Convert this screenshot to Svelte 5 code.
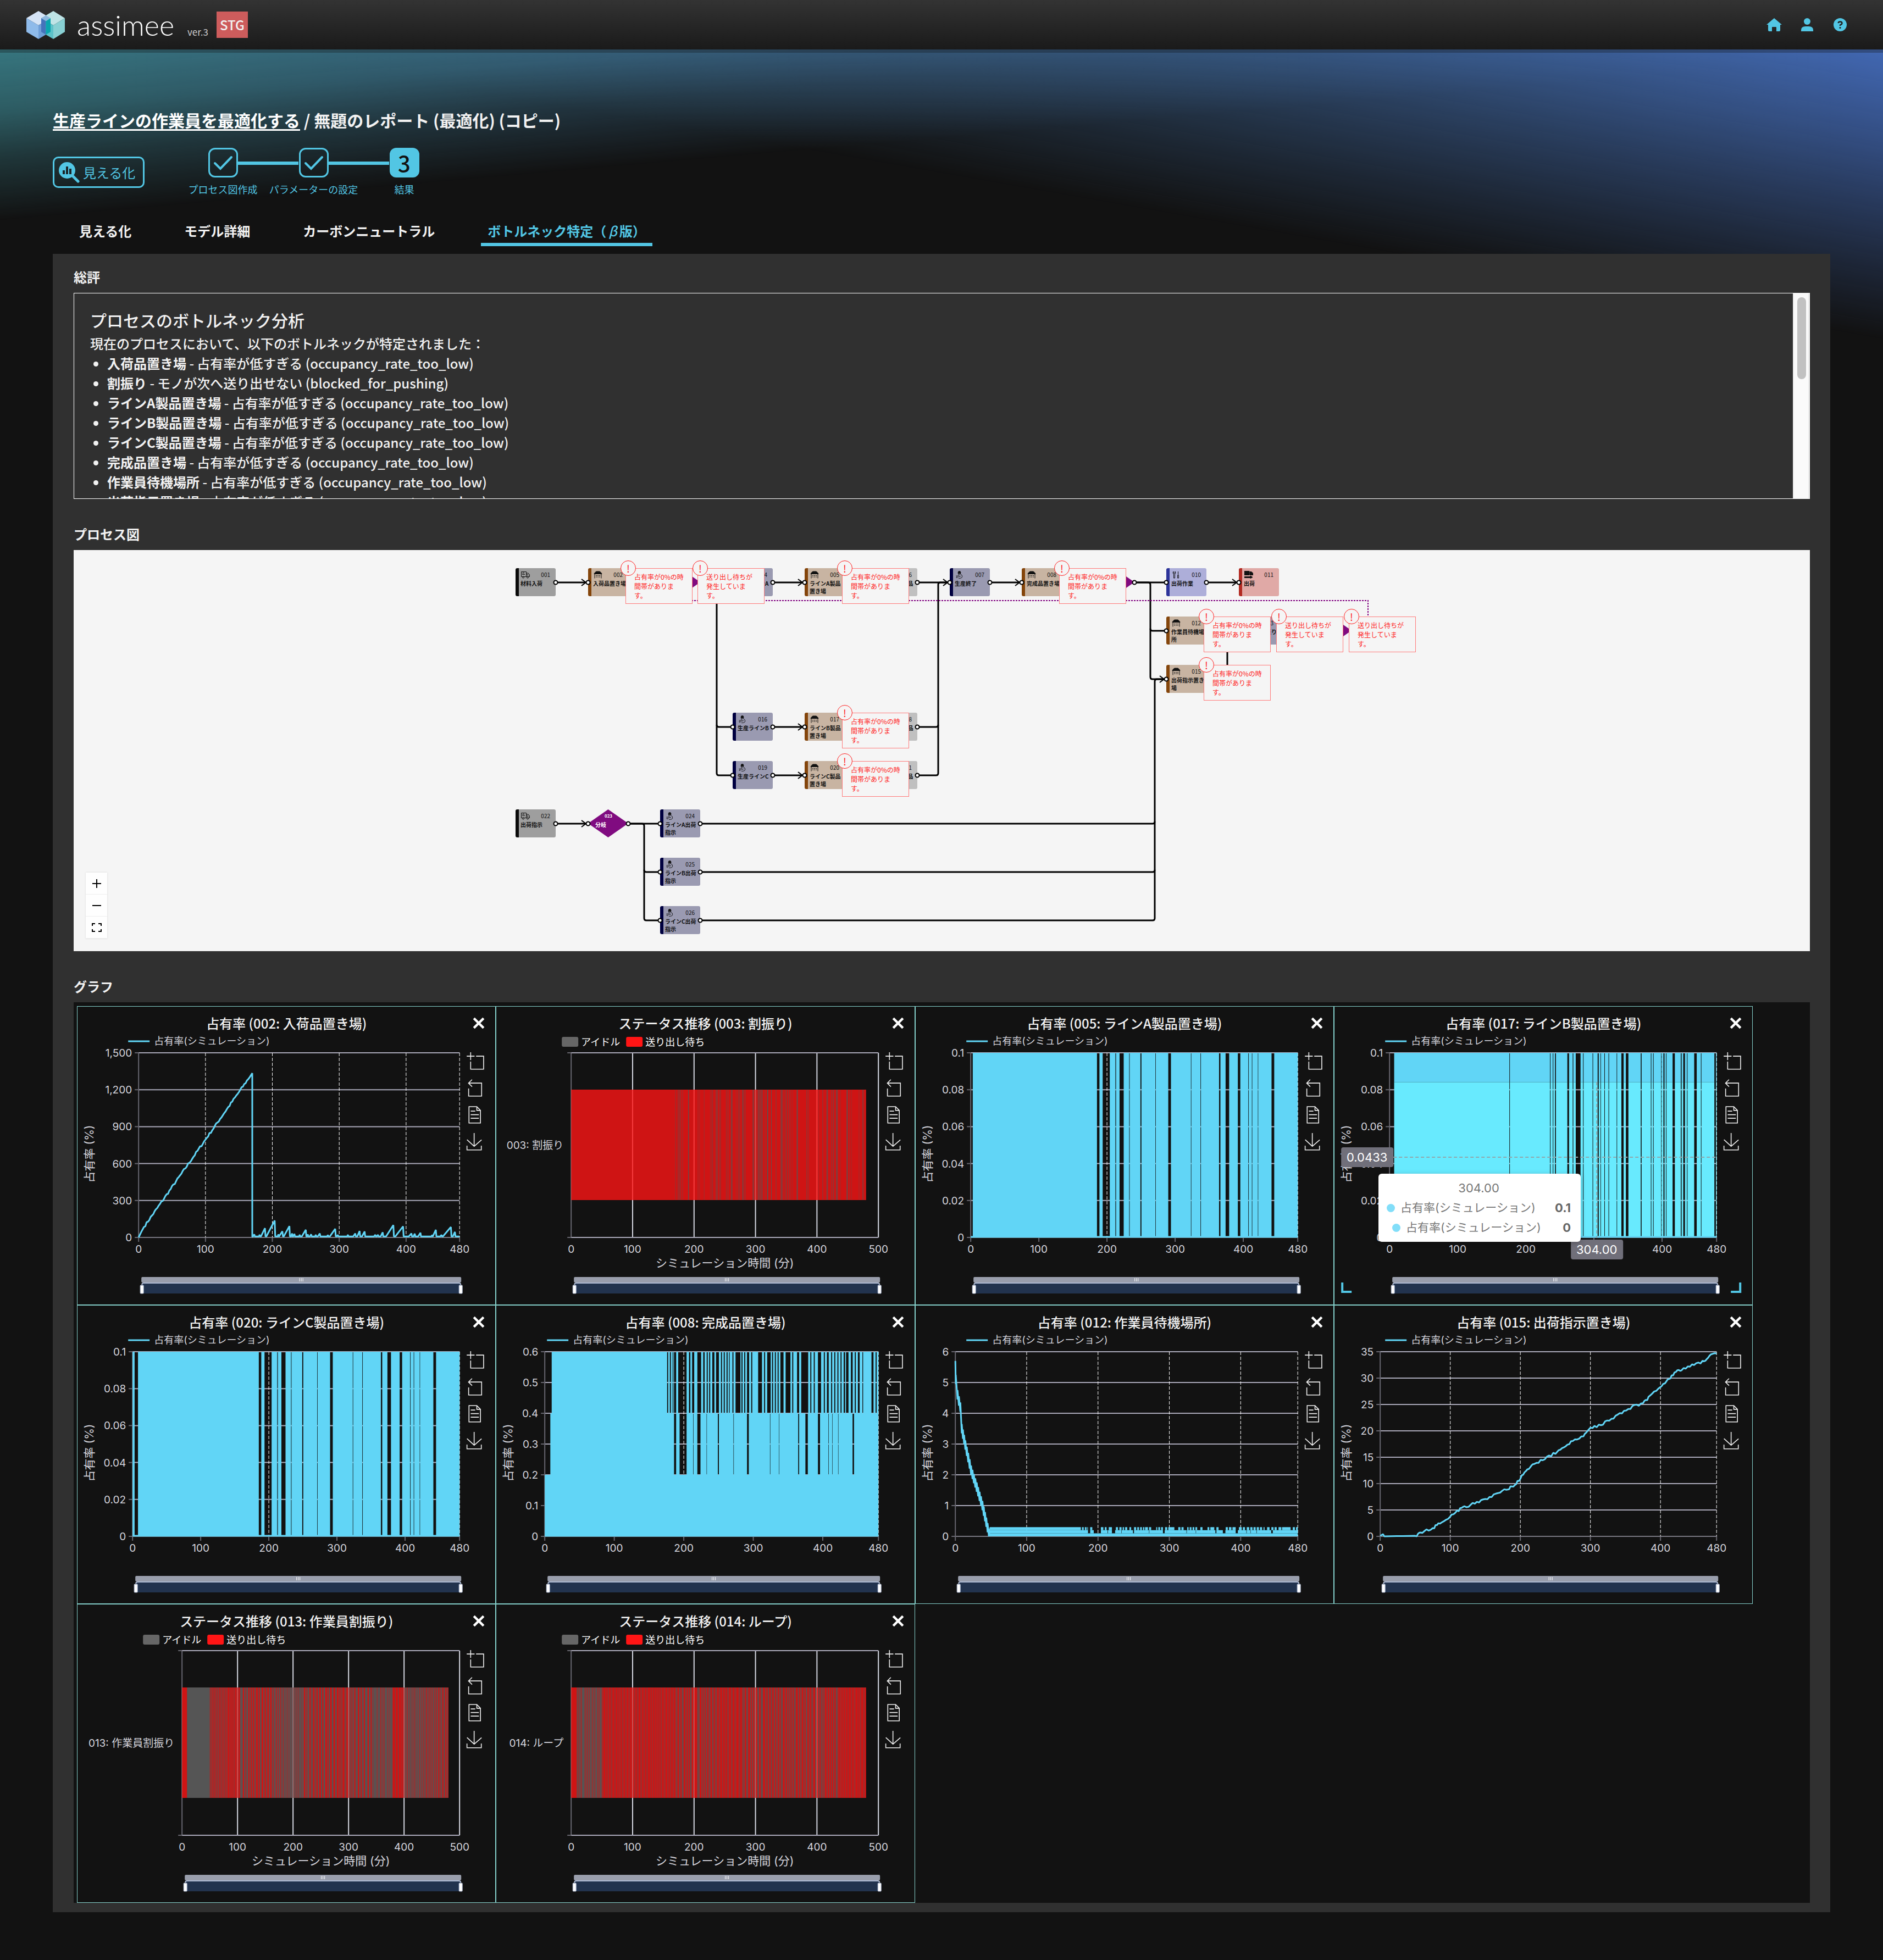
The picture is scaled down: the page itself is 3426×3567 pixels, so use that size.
<!--
  Report page
  Bottleneck tab: summary text, process diagram with warnings, and result graphs
-->
<script>
  const steps = [
    { label: 'プロセス図作成', done: true },
    { label: 'パラメーターの設定', done: true },
    { label: '結果', done: false }
  ];

  const tabs = ['見える化', 'モデル詳細', 'カーボンニュートラル'];

  const LOW = '占有率が低すぎる (occupancy_rate_too_low)';
  const findings = [
    ['入荷品置き場', LOW],
    ['割振り', 'モノが次へ送り出せない (blocked_for_pushing)'],
    ['ラインA製品置き場', LOW],
    ['ラインB製品置き場', LOW],
    ['ラインC製品置き場', LOW],
    ['完成品置き場', LOW],
    ['作業員待機場所', LOW],
    ['出荷指示置き場', LOW]
  ];

  /* ---------- process diagram ---------- */

  const EMPTY = '占有率が0%の時間帯があります。';
  const BLOCKED = '送り出し待ちが発生しています。';

  // c / r are grid positions on the canvas
  const nodes = [
    { id: '001', c: 0, r: 0, kind: 'source', name: '材料入荷', in: false },
    { id: '002', c: 1, r: 0, kind: 'store', name: '入荷品置き場', alert: EMPTY },
    { id: '003', c: 2, r: 0, kind: 'branch', name: '割振り', alert: BLOCKED },
    { id: '004', c: 3, r: 0, kind: 'work', name: '生産ラインA' },
    { id: '005', c: 4, r: 0, kind: 'store', name: 'ラインA製品置き場', alert: EMPTY },
    { id: '006', c: 5, r: 0, kind: 'move', name: 'ラインA製品' },
    { id: '007', c: 6, r: 0, kind: 'work', name: '生産終了' },
    { id: '008', c: 7, r: 0, kind: 'store', name: '完成品置き場', alert: EMPTY },
    { id: '009', c: 8, r: 0, kind: 'branch', name: '分岐' },
    { id: '010', c: 9, r: 0, kind: 'tool', name: '出荷作業' },
    { id: '011', c: 10, r: 0, kind: 'sink', name: '出荷', out: false },
    { id: '012', c: 9, r: 1, kind: 'store', name: '作業員待機場所', alert: EMPTY },
    { id: '013', c: 10, r: 1, kind: 'work', name: '作業員割振り', alert: BLOCKED },
    { id: '014', c: 11, r: 1, kind: 'branch', name: 'ループ', alert: BLOCKED, out: false },
    { id: '015', c: 9, r: 2, kind: 'store', name: '出荷指示置き場', alert: EMPTY, out: false },
    { id: '016', c: 3, r: 3, kind: 'work', name: '生産ラインB' },
    { id: '017', c: 4, r: 3, kind: 'store', name: 'ラインB製品置き場', alert: EMPTY },
    { id: '018', c: 5, r: 3, kind: 'move', name: 'ラインB製品' },
    { id: '019', c: 3, r: 4, kind: 'work', name: '生産ラインC' },
    { id: '020', c: 4, r: 4, kind: 'store', name: 'ラインC製品置き場', alert: EMPTY },
    { id: '021', c: 5, r: 4, kind: 'move', name: 'ラインC製品' },
    { id: '022', c: 0, r: 5, kind: 'source', name: '出荷指示', in: false },
    { id: '023', c: 1, r: 5, kind: 'branch', name: '分岐' },
    { id: '024', c: 2, r: 5, kind: 'work', name: 'ラインA出荷指示' },
    { id: '025', c: 2, r: 6, kind: 'work', name: 'ラインB出荷指示' },
    { id: '026', c: 2, r: 7, kind: 'work', name: 'ラインC出荷指示' }
  ].map((n) => ({ ...n, x: Math.round(n.c * 131.6), y: Math.round(33 + n.r * 87.8) }));

  const handles = nodes.flatMap((n) => [
    ...(n.in === false ? [] : [{ x: n.x, y: n.y + 26 }]),
    ...(n.out === false ? [] : [{ x: n.x + 73, y: n.y + 26 }])
  ]);

  const edges = [
    'M73 59H129',
    'M205 59H263',
    'M336 59H395',
    'M336 59H362Q366 59 366 63V318Q366 322 370 322H395',
    'M366 318V406Q366 410 370 410H395',
    'M468 59H523',
    'M599 59H658',
    'M731 59H787',
    'M731 322H765Q769 322 769 318V63Q769 59 773 59H787',
    'M731 410H765Q769 410 769 406V318',
    'M863 59H918',
    'M994 59H1053',
    'M1126 59H1184',
    'M1126 59H1151Q1155 59 1155 63V143Q1155 147 1159 147H1184',
    'M1155 143V231Q1155 235 1159 235H1181',
    'M1257 59H1313',
    'M468 322H523',
    'M599 322H658',
    'M468 410H523',
    'M599 410H658',
    'M73 498H129',
    'M205 498H263',
    'M205 498H230Q234 498 234 502V582Q234 586 238 586H263',
    'M234 582V670Q234 674 238 674H263',
    'M336 498H1159Q1163 498 1163 494V239Q1163 235 1167 235H1181',
    'M336 586H1159Q1163 586 1163 582V494',
    'M336 674H1159Q1163 674 1163 670V582',
    'M1295 160V240'
  ];

  const arrows = [
    [132, 59], [526, 59], [790, 59], [921, 59], [1316, 59], [1184, 235],
    [526, 322], [526, 410], [132, 498]
  ];

  /* ---------- graphs ---------- */

  const RIGHT = 696;
  const TOP = 85;
  const BOTTOM = 421;
  const SLIT = 0.8;

  // Minutes when the stock of a line was empty, [from, to]
  const lineGaps = [
    [185.3, 188.9], [193.7, 204.1], [212.3, 213.3], [218.5, 224.5], [232.6, 233.3],
    [249, 250.6], [271, 271.6], [289.9, 293.9], [323.2, 323.8], [337.2, 337.9],
    [364.5, 366.5], [374.1, 379.3], [392.1, 395.7], [407.4, 408.1], [412.6, 413.3],
    [421.4, 422], [441.5, 445.5]
  ];

  const lineBGaps = [
    175.9, 235.5, 239.6, [242.9, 244.3], [261, 263.5], [268.8, 269.8], [273.3, 280.3], 284, 298,
    [305.4, 307], 309.5, 315.3, 321.4, 333.3, [340.3, 343.6], [346.9, 350.6], [368.7, 370],
    383.5, 386.8, 398.7, [402, 403.6], 405.7, [415.5, 418.8], [427.5, 428.7], [431.1, 433.6],
    436.5, [447.2, 450.9], 457, [476.8, 479]
  ].map((g) => (Array.isArray(g) ? g : [g, g + SLIT]));

  const midGaps = [
    [186, 189], [194, 204], [213.4, 214], [219.5, 224], [232.8, 233.3], [249, 250.5],
    [271.5, 272], [291, 293.5], [324, 324.5], [337, 337.5], [364.6, 366], [375, 378.5],
    [393, 396], [408, 408.5], [413.5, 414], [422, 422.5], [442.8, 445]
  ];

  const topGaps = [
    [176, 177.5], [180, 181.5], [184, 185], [186, 189], [192, 204], [207.5, 209.5], [212, 215],
    [219.5, 225], [228, 230], [233, 234.5], [236.5, 238], [241, 244], [246.5, 250.5],
    [253.5, 255], [257.5, 259], [261.5, 263], [265, 266], [270, 271.5], [274.5, 281.5],
    [283, 284.5], [287, 288.5], [291, 294], [297, 298.5], [307, 312.5], [315.5, 317],
    [320, 325], [327, 328.5], [331, 332.5], [335, 336.5], [339, 343.5], [346.5, 353.5],
    [356, 357.5], [363, 366], [369, 379], [382, 383.5], [387, 388.5], [393, 397.5],
    [401.5, 403], [406, 408.5], [412, 413.5], [416.5, 418], [421, 422.5], [425.5, 427],
    [430, 432], [433.5, 437], [440.5, 443], [446, 447.5], [450.5, 453], [457, 458],
    [470, 473], [476, 477.5]
  ];

  function random(seed) {
    let s = seed;
    return () => {
      s = (s * 16807) % 2147483647;
      return s / 2147483647;
    };
  }

  function sawtooth() {
    const rnd = random(7);
    const points = [[0, 0], [4, 45], [8, 85]];
    for (let t = 10; t < 170; t += 2) {
      points.push([t, 85 + ((t - 8) / 162) * 1250 + (rnd() - 0.5) * 20]);
    }
    points.push([170, 1335], [170, 5]);
    // [start, peak time, peak value]
    const peaks = [
      [171, 173, 25], [180, 181, 22], [183, 189, 75], [191, 203.5, 137], [208, 209, 25],
      [210, 215, 50], [217, 225.5, 92], [228, 229.5, 32], [231, 233, 28], [240, 241, 22],
      [244, 250, 62], [252, 253, 25], [256, 258, 25], [264, 265, 22], [268, 271, 32],
      [282, 283, 20], [286, 294, 70], [296, 298, 20], [312, 313, 22], [321, 324, 32],
      [327, 330.5, 52], [334, 338, 48], [352, 354, 22], [356, 358, 22], [362, 365, 42],
      [370, 381, 100], [384, 395.5, 90], [404, 408, 32], [411, 413, 30], [418, 421.5, 38],
      [438, 439, 20], [440, 444.5, 62], [451, 453, 20], [455, 467, 85], [470, 473, 45]
    ];
    for (const [from, at, value] of peaks) {
      points.push([from, 8], [at, value], [at + 0.8, 8]);
    }
    points.push([480, 8]);
    return points;
  }

  function decline() {
    const base = [
      [0, 5.7], [0.6, 5.1], [3, 4.6], [7, 4.2], [9, 3.5], [14, 2.97], [22, 2.15], [30, 1.6],
      [38, 1], [47, 0.1]
    ];
    const points = [[0, 5.7]];
    for (let i = 1; i < base.length; i++) {
      const [t0, v0] = base[i - 1];
      const [t1, v1] = base[i];
      const n = Math.max(1, Math.round((t1 - t0) / 2));
      for (let k = 1; k <= n; k++) {
        const v = v0 + ((v1 - v0) * k) / n;
        const t = t0 + ((t1 - t0) * k) / n;
        points.push([t, Math.max(0, v - 0.15)], [t, v + 0.15]);
      }
    }
    points.push([48, 0]);
    return points;
  }

  function climb() {
    const rnd = random(21);
    const base = [
      [0, 0.1], [4, 0.4], [6, 0], [50, 0.1], [60, 0.8], [75, 1.5], [85, 2.6], [100, 3.8],
      [110, 4.8], [120, 5.6], [135, 6.2], [150, 7], [165, 8], [180, 9], [190, 9.4], [200, 11],
      [210, 12.6], [220, 13.7], [235, 14.8], [250, 15.8], [262, 17], [275, 18], [290, 19],
      [300, 20.5], [315, 21.2], [330, 22.3], [345, 23.5], [360, 24.6], [375, 25.2],
      [385, 26.6], [400, 28.5], [410, 29.6], [420, 31], [430, 31.6], [445, 32.5],
      [460, 33.1], [470, 34.2], [480, 34.6]
    ];
    const points = [base[0]];
    for (let i = 1; i < base.length; i++) {
      const [t0, v0] = base[i - 1];
      const [t1, v1] = base[i];
      for (let k = 1; k <= 5; k++) {
        const jitter = t1 > 50 ? (rnd() - 0.5) * 0.5 : 0;
        points.push([t0 + ((t1 - t0) * k) / 5, v0 + ((v1 - v0) * k) / 5 + jitter]);
      }
    }
    return points;
  }

  // Dark stripes of idle time; share is the part of the zone that is idle
  function idle(seed, zones) {
    const rnd = random(seed);
    const out = [];
    for (const [from, to, share, period, alpha] of zones) {
      let t = from;
      while (t < to) {
        const len = period * (0.6 + rnd() * 0.8);
        const w = Math.min(len * share, to - t);
        out.push([t, t + w, alpha * (0.7 + rnd() * 0.3)]);
        t += len;
      }
    }
    return out;
  }

  const redSlits = [
    [169, 170.5, 0.3], [173, 179, 0.3], [181, 182, 0.4], [190.5, 191.5, 1], [206, 207, 0.4],
    [208.5, 209.5, 0.3], [216, 217, 0.4], [226, 231, 0.2], [230, 230.8, 0.4], [235, 239, 0.4],
    [241, 244, 0.3], [252, 253, 0.5], [254.5, 256, 0.4], [260, 262.5, 0.6], [268, 269, 0.4],
    [271, 275, 0.3], [278, 281, 0.5], [282, 284, 0.3], [295, 298, 0.5], [300, 301, 0.5],
    [303, 312, 0.35], [305, 306, 0.5], [310, 311, 0.5], [315, 316, 0.5], [319, 320.5, 1],
    [325.5, 326.3, 1], [333, 334, 0.6], [341, 344, 0.6], [346, 347, 0.4], [349, 351, 0.5],
    [353, 355, 0.4], [357, 358, 0.4], [360, 361, 0.3], [367, 369, 0.7], [383, 384, 0.6],
    [385.5, 386.5, 0.4], [402, 403, 0.3], [409, 410, 0.6], [415.5, 418, 0.6],
    [423, 424, 0.6], [425.5, 428, 0.4], [431, 434, 0.6], [438, 439, 0.3], [448, 450.5, 0.6],
    [453, 454, 0.4], [456, 457, 0.3], [468, 469, 0.4], [474, 476, 0.5]
  ];

  const occupancy = (c) => ({ type: 'value', tMax: 480, xTicks: [0, 100, 200, 300, 400, 480], bands: [], ...c });
  const status = (c) => ({ type: 'status', tMax: 500, xTicks: [0, 100, 200, 300, 400, 500], ...c });
  const tenths = ['0', '0.02', '0.04', '0.06', '0.08', '0.1'];

  const charts = [
    occupancy({
      title: '占有率 (002: 入荷品置き場)', x0: 112, max: 1500, points: sawtooth(),
      yTicks: ['0', '300', '600', '900', '1,200', '1,500']
    }),
    status({ title: 'ステータス推移 (003: 割振り)', x0: 137, label: '003: 割振り', stripes: redSlits }),
    occupancy({
      title: '占有率 (005: ラインA製品置き場)', x0: 101, max: 0.1, yTicks: tenths,
      bands: [{ lo: 0, hi: 0.1, gaps: [[0, 3], ...lineGaps] }]
    }),
    occupancy({
      title: '占有率 (017: ラインB製品置き場)', x0: 101, max: 0.1, yTicks: tenths, active: true,
      bands: [
        { lo: 0.0841, hi: 0.1, gaps: [[0, 6.8], ...lineBGaps] },
        { lo: 0, hi: 0.0841, gaps: [[0, 6.8], ...lineBGaps], bright: true }
      ]
    }),
    occupancy({
      title: '占有率 (020: ラインC製品置き場)', x0: 101, max: 0.1, yTicks: tenths,
      bands: [{ lo: 0, hi: 0.1, gaps: [[3, 8], ...lineGaps] }]
    }),
    occupancy({
      title: '占有率 (008: 完成品置き場)', x0: 89, max: 0.6,
      yTicks: ['0', '0.1', '0.2', '0.3', '0.4', '0.5', '0.6'],
      bands: [
        { lo: 0, hi: 0.2, gaps: [] },
        { lo: 0.2, hi: 0.4, gaps: [[0, 8], ...midGaps] },
        { lo: 0.4, hi: 0.6, gaps: [[0, 10], ...topGaps] }
      ]
    }),
    occupancy({
      title: '占有率 (012: 作業員待機場所)', x0: 73, max: 6, points: decline(),
      yTicks: ['0', '1', '2', '3', '4', '5', '6'],
      bands: [
        { lo: 0, hi: 0.1, gaps: [[0, 48]] },
        { lo: 0.1, hi: 0.2, gaps: [[0, 48], ...midGaps] },
        { lo: 0.2, hi: 0.3, gaps: [[0, 48], ...topGaps] }
      ]
    }),
    occupancy({
      title: '占有率 (015: 出荷指示置き場)', x0: 84, max: 35, points: climb(),
      yTicks: ['0', '5', '10', '15', '20', '25', '30', '35']
    }),
    status({
      title: 'ステータス推移 (013: 作業員割振り)', x0: 191, label: '013: 作業員割振り',
      stripes: [
        [9, 50, 1],
        ...idle(5, [
          [50, 80, 0.8, 3, 0.6], [80, 105, 0.5, 3.5, 0.5], [105, 122, 0.65, 5, 1],
          [122, 165, 0.5, 5, 0.9], [165, 185, 0.75, 4, 1], [185, 197, 0.95, 4, 1],
          [197, 215, 0.95, 6, 1], [215, 240, 0.65, 5, 1], [240, 285, 0.5, 5, 1],
          [285, 300, 0.6, 6, 0.7], [300, 345, 0.65, 5, 1], [345, 378, 0.88, 5, 1],
          [378, 400, 0.25, 5, 0.9], [400, 425, 0.9, 5, 1], [425, 455, 0.75, 4, 1],
          [455, 480, 0.65, 4.5, 1]
        ])
      ]
    }),
    status({
      title: 'ステータス推移 (014: ループ)', x0: 137, label: '014: ループ',
      stripes: idle(9, [
        [9, 50, 0.85, 4.5, 1], [50, 170, 0.55, 4.5, 0.4], [170, 200, 0.55, 4.5, 0.8],
        [205, 240, 0.6, 5, 0.75], [240, 280, 0.5, 5, 0.55], [280, 355, 0.55, 5, 0.85],
        [355, 410, 0.55, 5, 0.8], [410, 435, 0.5, 5, 0.8], [435, 480, 0.5, 4.5, 0.4]
      ])
    })
  ];

  const px = (c, t) => c.x0 + (t / c.tMax) * (RIGHT - c.x0);
  const py = (c, v) => BOTTOM - (v / c.max) * (BOTTOM - TOP);
  const tickY = (c, i) => BOTTOM - (i / (c.yTicks.length - 1)) * (BOTTOM - TOP);

  function linePath(c) {
    return 'M' + c.points.map(([t, v]) => `${px(c, t).toFixed(1)} ${py(c, v).toFixed(1)}`).join('L');
  }

  // Filled blocks between the gaps
  function bandPath(c, band) {
    const y1 = py(c, band.hi).toFixed(1);
    const y2 = py(c, band.lo).toFixed(1);
    let t = 0;
    let d = '';
    for (const [from, to] of [...band.gaps, [480, 480]]) {
      if (from > t) d += `M${px(c, t).toFixed(1)} ${y1}H${px(c, from).toFixed(1)}V${y2}H${px(c, t).toFixed(1)}Z`;
      t = Math.max(t, to);
    }
    return d;
  }

  const tools = [
    'M0,13.5h26.9 M13.5,26.9V0 M32.1,13.5H58V58H13.5 V32.1',
    'M22,1.4L9.9,13.5l12.3,12.3 M10.3,13.5H54.9v44.6 H10.3v-26',
    'M17.5,17.3H33 M45.4,29.5h-28 M11.5,2v56H51V14.8L38.4,2H11.5z M38.4,2.2v12.7H51 M45.4,41.7h-28',
    'M4.7,22.9L29.3,45.5L54.7,23.4M4.6,43.6L4.6,58L53.8,58L53.8,43.6M29.2,45.1L29.2,0'
  ];
</script>

<div class="page">
  <header class="topbar">
    <a class="brand" href="#top" aria-label="assimee">
      <svg class="logo" viewBox="0 0 70 51" aria-hidden="true">
        <path d="M22 0L44 13L22 26L0 13Z" fill="#d5e4f6" />
        <path d="M0 13L22 26V51L0 38Z" fill="#8fbbea" />
        <path d="M22 26L44 13V38L22 51Z" fill="#6f9fd8" />
        <path d="M49 0L70 13L49 26L27 13Z" fill="#bfe4e6" />
        <path d="M49 26L70 13V38L49 51Z" fill="#88d0d3" />
        <path d="M27 13L49 26V51L27 38Z" fill="#5cc2c9" />
        <path d="M27 13L35.500 8L44 13L35.500 18.500Z" fill="#8db7dd" />
        <path d="M27 13L35.500 18.500V43L27 38Z" fill="#4573bb" />
        <path d="M35.500 18.500L44 13V38L35.500 43Z" fill="#0aa5ad" />
      </svg>
      <span class="brand-name">assimee</span>
      <span class="version">ver.3</span>
    </a>
    <span class="stage-badge">STG</span>
    <nav class="top-links">
      <a href="#home" aria-label="ホーム">
        <svg viewBox="0 0 28 24"><path d="M14 0L28 12H25V22Q25 24 23 24H18V17Q18 16 17 16H11Q10 16 10 17V24H5Q3 24 3 22V12H0Z" /></svg>
      </a>
      <a href="#account" aria-label="アカウント">
        <svg viewBox="0 0 28 24"><circle cx="14" cy="6" r="6" /><path d="M3 24V22Q3 15 11 15H17Q25 15 25 22V24Z" /></svg>
      </a>
      <a href="#help" aria-label="ヘルプ">
        <svg viewBox="0 0 28 24">
          <circle cx="14" cy="12" r="12" />
          <path d="M10.500 9Q11 6.500 14 6.500Q17.500 6.500 17.500 9.200Q17.500 11 14 12.500V14" fill="none" stroke="#1f1f1f" stroke-width="2.400" />
          <circle cx="14" cy="17.500" r="1.600" fill="#1f1f1f" />
        </svg>
      </a>
    </nav>
  </header>

  <main class="content">
    <h1 class="title"><a href="#project">生産ラインの作業員を最適化する</a> / 無題のレポート (最適化) (コピー)</h1>

    <div class="progress">
      <button class="mode" type="button">
        <svg viewBox="0 0 38 38" aria-hidden="true">
          <circle cx="15" cy="15" r="15" fill="#52c6e4" />
          <path d="M25 25L35 35" stroke="#52c6e4" stroke-width="5" stroke-linecap="round" />
          <path d="M9 15V22M15 8V22M21 12V22" stroke="#1a2427" stroke-width="4" />
        </svg>
        見える化
      </button>
      <ol class="steps">
        {#each steps as step, i}
          <li class:current={!step.done}>
            <span class="step-box">
              {#if step.done}
                <svg viewBox="0 0 54 54" aria-label="完了"><path d="M12 28L22 38L42 17" /></svg>
              {:else}
                {i + 1}
              {/if}
            </span>
            <span class="step-label">{step.label}</span>
          </li>
        {/each}
      </ol>
    </div>

    <nav class="tabs">
      {#each tabs as tab}
        <a href="#tab">{tab}</a>
      {/each}
      <a href="#tab" class="selected" aria-current="page">ボトルネック特定（<i>β</i>版）</a>
    </nav>

    <div class="panel">
      <h2>総評</h2>
      <section class="summary">
        <div class="summary-text">
          <h3>プロセスのボトルネック分析</h3>
          <p>現在のプロセスにおいて、以下のボトルネックが特定されました：</p>
          <ul>
            {#each findings as [name, reason]}
              <li><strong>{name}</strong> - {reason}</li>
            {/each}
          </ul>
        </div>
        <div class="scrollbar"><div class="thumb"></div></div>
      </section>

      <h2>プロセス図</h2>
      <section class="diagram">
        <div class="canvas">
          <svg class="edges" width="1660" height="730" aria-hidden="true">
            {#each edges as d}
              <path {d} />
            {/each}
            {#each arrows as [x, y]}
              <path class="head" d="M{x - 12} {y - 6}L{x - 4} {y}L{x - 12} {y + 6}" />
            {/each}
            <path class="loop" d="M300 92H1551V147" />
          </svg>

          {#each nodes as node}
            <div class="node {node.kind}" style="left: {node.x}px; top: {node.y}px">
              {#if node.kind === 'branch'}
                <svg class="diamond" viewBox="0 0 73 51" aria-hidden="true"><path d="M36.500 0L73 25.500L36.500 51L0 25.500Z" /></svg>
              {/if}
              <div class="node-head">
                {#if node.kind === 'source'}
                  <svg viewBox="0 0 16 13"><path d="M0.500 1H9.500V10H0.500ZM9.500 3.500H13L15.500 6.500V10H9.500M2 3.500H6L4.500 2M2 6H7M11 5V7H13.500" /><circle cx="4" cy="11" r="1.500" /><circle cx="12" cy="11" r="1.500" /></svg>
                {:else if node.kind === 'store'}
                  <svg viewBox="0 0 16 13"><path class="solid" d="M3 2L5 0.500H11L13 2L15 4.500V5H1V4.500Z" /><path d="M2 5V13M14 5V13M4 8H6M7 8H9M10 8H12M4 10.500H6M7 10.500H9M10 10.500H12" /></svg>
                {:else if node.kind === 'work'}
                  <svg viewBox="0 0 16 15"><path class="solid" d="M5 3Q5 0.500 7.500 0.500Q10 0.500 10 3V5H5Z" /><path d="M5.500 5V6Q7.500 8 9.500 6V5M10 6.500Q13.500 8 13 11.500Q12.500 14.500 6 14.500M5.500 7L7 11L10 10M1.500 9L3.500 13.500M3.500 8.500L5.500 12.500M1 12L3 14" /></svg>
                {:else if node.kind === 'tool'}
                  <svg viewBox="0 0 16 13"><path d="M3 0.500V3L4.500 4L6 3V0.500Q8 3 5.500 5.500V12.500H3.500V5.500Q1 3 3 0.500M11.500 0.500V7M10.500 7.500H12.500V12.500H10.500Z" /></svg>
                {:else if node.kind === 'sink'}
                  <svg viewBox="0 0 16 13"><path class="solid" d="M0 0H9V7H0ZM10 1H13L16 4V7H10ZM0 10H11V8.500L15 11L11 13V12H0Z" /></svg>
                {/if}
                <span>{node.id}</span>
              </div>
              <div class="node-name">{node.name}</div>
            </div>
          {/each}

          <svg class="handles" width="1660" height="730" aria-hidden="true">
            {#each handles as h}
              <circle cx={h.x} cy={h.y} r="3.500" />
            {/each}
          </svg>

          {#each nodes.filter((n) => n.alert) as node}
            <div class="alert" style="left: {node.x + 68}px; top: {node.y}px">
              <span class="alert-mark">!</span>
              {node.alert}
            </div>
          {/each}
        </div>

        <div class="controls">
          <button type="button" aria-label="拡大"><svg viewBox="0 0 18 18"><path d="M9 1V17M1 9H17" /></svg></button>
          <button type="button" aria-label="縮小"><svg viewBox="0 0 18 18"><path d="M1 9H17" /></svg></button>
          <button type="button" aria-label="全体表示"><svg viewBox="0 0 18 18"><path d="M1 6V2H6M12 2H17V6M17 12V16H12M6 16H1V12" /></svg></button>
        </div>
      </section>

      <h2>グラフ</h2>
      <section class="board">
        <div class="graphs">
          {#each charts as c}
            <article class="graph">
              <div class="graph-head">
                <h3>{c.title}</h3>
                <button type="button" aria-label="閉じる"><svg viewBox="0 0 20 20"><path d="M2 2L18 18M18 2L2 18" /></svg></button>
              </div>
              <svg class="plot" viewBox="1 51 760 492">
                {#if c.type === 'value'}
                  <path class="series" d="M93 64H132" />
                  <text class="legend" x="140" y="70">占有率(シミュレーション)</text>
                  <text class="axis-name" transform="translate(30 269) rotate(-90)" text-anchor="middle">占有率 (%)</text>

                  {#each c.yTicks as label, i}
                    <path class="tick" d="M{c.x0 - 7} {tickY(c, i)}H{c.x0}" />
                    <path class="rule" d="M{c.x0} {tickY(c, i)}H{RIGHT}" class:base={i === 0} />
                    <text class="label" x={c.x0 - 12} y={tickY(c, i) + 7} text-anchor="end">{label}</text>
                  {/each}
                  {#each c.xTicks as t}
                    <path class="tick" d="M{px(c, t)} {BOTTOM}V{BOTTOM + 8}" />
                    {#if t > 0}
                      <path class="dash" d="M{px(c, t)} {TOP}V{BOTTOM}" />
                    {/if}
                  {/each}
                  <path class="tick" d="M{c.x0} {TOP}V{BOTTOM}" />

                  {#each c.bands as band}
                    <path class="band" class:bright={band.bright} d={bandPath(c, band)} />
                  {/each}
                  {#if c.bands.length > 0 && !c.points}
                    <path class="series" d="M{c.x0} {BOTTOM - 1}H{RIGHT}" />
                  {/if}
                  {#if c.points}
                    <path class="series" d={linePath(c)} />
                  {/if}
                {:else}
                  <rect class="idle" x="120" y="56" width="30" height="18" rx="3" />
                  <text class="legend strong" x="155" y="72">アイドル</text>
                  <rect class="blocked" x="237" y="56" width="30" height="18" rx="3" />
                  <text class="legend strong" x="272" y="72">送り出し待ち</text>

                  {#each c.xTicks as t}
                    <path class={t === 0 ? 'tick' : 'grid'} d="M{px(c, t)} {TOP}V{BOTTOM}" />
                  {/each}
                  <path class="rule" d="M{c.x0} {TOP}H{RIGHT}M{c.x0} {BOTTOM}H{RIGHT}" />
                  <path class="tick" d="M{c.x0 - 7} {TOP}H{c.x0}M{c.x0 - 7} {BOTTOM}H{c.x0}" />

                  <g class="timeline">
                    <rect class="blocked" x={c.x0} y="152" width={px(c, 480) - c.x0} height="201" />
                    {#each c.stripes as [from, to, alpha]}
                      <rect class="idle" x={px(c, from)} y="152" width={px(c, to) - px(c, from)} height="201" opacity={alpha} />
                    {/each}
                  </g>
                  <text class="label" x={c.x0 - 14} y="260" text-anchor="end">{c.label}</text>
                  <text class="axis-name" x={(c.x0 + RIGHT) / 2} y="475" text-anchor="middle">シミュレーション時間 (分)</text>
                {/if}

                {#each c.xTicks as t}
                  <text class="label" x={px(c, t)} y="449" text-anchor="middle">{t}</text>
                {/each}

                {#each tools as d, i}
                  <path class="tool" transform="translate({i === 0 ? 709 : 707} {84 + i * 49}) scale(0.530)" {d} />
                {/each}

                <rect class="zoom-fill" x={c.x0 + 6} y="504" width={RIGHT - c.x0 - 4} height="19" />
                <rect class="zoom-bar" x={c.x0 + 5} y="493" width={RIGHT - c.x0 - 2} height="10" rx="2" />
                <path class="zoom-edge" d="M{c.x0 + 6} 507Q{c.x0 + 6} 504 {c.x0 + 9} 504H{RIGHT - 1}Q{RIGHT + 2} 504 {RIGHT + 2} 507" />
                <path class="grip" d="M{(c.x0 + RIGHT) / 2 + 1} 495V501m3 -6v6m3 -6v6" />
                <rect class="zoom-knob" x={c.x0 + 3} y="508" width="6" height="15" rx="1" />
                <rect class="zoom-knob" x={RIGHT - 1} y="508" width="6" height="15" rx="1" />

                {#if c.active}
                  <path class="pointer" d="M108 275H{RIGHT}M478 138V{BOTTOM}" />
                  <rect class="pointer-box" x="13" y="257" width="95" height="36" rx="4" />
                  <text class="pointer-text" x="60" y="283" text-anchor="middle">0.0433</text>
                  <rect class="pointer-box" x="431" y="425" width="95" height="36" rx="4" />
                  <text class="pointer-text" x="478" y="451" text-anchor="middle">304.00</text>
                  <path class="corner" d="M15 503V520H32M722 520H739V503" />
                {/if}
              </svg>
              {#if c.active}
                <div class="tooltip">
                  <p>304.00</p>
                  <div class="tip-row"><i></i><span>占有率(シミュレーション)</span><b>0.1</b></div>
                  <div class="tip-row inner"><i></i><span>占有率(シミュレーション)</span><b>0</b></div>
                </div>
              {/if}
            </article>
          {/each}
        </div>
      </section>
    </div>
  </main>
</div>

<style>
  :global(body) {
    background: #121212;
  }

  .page {
    --accent: #52c6e4;
    position: relative;
    min-height: 100vh;
    color: #f2f2f2;
    font-family: 'Noto Sans CJK JP', sans-serif;
    font-size: 24px;
    line-height: 36px;
  }

  /* Coloured glow behind the page head */
  .page::before {
    content: '';
    position: absolute;
    top: 90px;
    left: 0;
    right: 0;
    height: 560px;
    background: linear-gradient(90deg, #37767f, #3f6c94 45%, #4268b3);
    -webkit-mask-image:
      linear-gradient(190deg, #000 0, rgba(0, 0, 0, 0.7) 160px, rgba(0, 0, 0, 0.5) 256px, rgba(0, 0, 0, 0.25) 384px, transparent 520px),
      linear-gradient(175deg, #000 0, rgba(0, 0, 0, 0.74) 110px, rgba(0, 0, 0, 0.37) 195px, transparent 310px);
    mask-image:
      linear-gradient(190deg, #000 0, rgba(0, 0, 0, 0.7) 160px, rgba(0, 0, 0, 0.5) 256px, rgba(0, 0, 0, 0.25) 384px, transparent 520px),
      linear-gradient(175deg, #000 0, rgba(0, 0, 0, 0.74) 110px, rgba(0, 0, 0, 0.37) 195px, transparent 310px);
  }

  h1,
  h2,
  h3,
  p,
  ul,
  ol {
    margin: 0;
    padding: 0;
  }

  button {
    font: inherit;
    cursor: pointer;
  }

  /* Header */
  .topbar {
    position: relative;
    display: flex;
    align-items: center;
    height: 90px;
    padding: 0 64px 0 48px;
    box-sizing: border-box;
    background: linear-gradient(#333, #1a1a1a);
    box-shadow: 0 6px 0 rgba(18, 18, 18, 0.3);
  }

  .brand {
    display: flex;
    align-items: baseline;
    color: #fff;
    text-decoration: none;
  }

  .logo {
    width: 70px;
    height: 51px;
    align-self: center;
  }

  .brand-name {
    margin-left: 22px;
    font-family: Lato, sans-serif;
    font-size: 52px;
    font-weight: 300;
    line-height: 72px;
  }

  .version {
    margin-left: 24px;
    font-size: 17px;
    color: #ccc;
  }

  .stage-badge {
    margin-left: 15px;
    width: 57px;
    height: 48px;
    line-height: 48px;
    background: #cd5c5c;
    text-align: center;
    font-weight: 500;
  }

  .top-links {
    display: flex;
    gap: 32px;
    margin-left: auto;
  }

  .top-links svg {
    display: block;
    width: 28px;
    height: 24px;
    fill: var(--accent);
  }

  /* Page head */
  .content {
    position: relative;
    padding: 106px 96px 86px;
  }

  .title {
    font-size: 30px;
    line-height: 45px;
    font-weight: 700;
  }

  .title a {
    color: #fff;
    text-underline-offset: 4px;
    text-decoration-thickness: 3px;
  }

  .progress {
    display: flex;
    align-items: center;
    gap: 60px;
    margin-top: 28px;
  }

  .mode {
    display: flex;
    align-items: center;
    gap: 6px;
    width: 167px;
    height: 57px;
    padding: 0 0 0 8px;
    border: 3px solid var(--accent);
    border-radius: 10px;
    background: transparent;
    color: var(--accent);
  }

  .mode svg {
    width: 38px;
    height: 38px;
  }

  .steps {
    display: grid;
    grid-template-columns: repeat(3, 165px);
    list-style: none;
  }

  .steps li {
    position: relative;
    display: flex;
    flex-direction: column;
    align-items: center;
    gap: 8px;
  }

  .steps li + li::before {
    content: '';
    position: absolute;
    top: 25px;
    right: 110px;
    width: 111px;
    height: 6px;
    background: var(--accent);
  }

  .step-box {
    width: 54px;
    height: 54px;
    border: 3px solid var(--accent);
    border-radius: 12px;
    box-sizing: border-box;
    text-align: center;
    font-size: 40px;
    font-weight: 500;
    line-height: 48px;
  }

  .step-box svg {
    display: block;
    margin: -3px;
    fill: none;
    stroke: var(--accent);
    stroke-width: 4;
    stroke-linecap: round;
  }

  .current .step-box {
    background: var(--accent);
    color: #121212;
  }

  .step-label {
    font-size: 18px;
    line-height: 27px;
    color: var(--accent);
    white-space: nowrap;
  }

  .tabs {
    display: flex;
    gap: 72px;
    margin: 44px 36px 14px;
  }

  .tabs a {
    padding: 0 12px 4px;
    border-bottom: 6px solid transparent;
    color: #f2f2f2;
    font-weight: 700;
    text-decoration: none;
  }

  .tabs i {
    margin: 0 4px;
    font-weight: 500;
  }

  .tabs .selected {
    color: var(--accent);
    border-color: var(--accent);
  }

  .panel {
    padding: 24px 37px 22px 38px;
    background: #303030;
  }

  .panel h2 {
    margin: 46px 0 11px;
    font-size: 24px;
    font-weight: 700;
    line-height: 36px;
  }

  .panel h2:first-child {
    margin-top: 0;
  }

  /* Summary */
  .summary {
    display: flex;
    height: 375px;
    box-sizing: border-box;
    border: 1px solid #fff;
    overflow: hidden;
  }

  .summary-text {
    flex: 1;
    padding: 25px 30px 0 29px;
  }

  .summary h3 {
    margin-bottom: 1px;
    font-size: 30px;
    font-weight: 500;
    line-height: 47px;
  }

  .summary p,
  .summary li {
    font-weight: 500;
  }

  .summary ul {
    padding-left: 31px;
  }

  .scrollbar {
    width: 20px;
    padding: 7px 0 0 6px;
    background: #fafafa;
    border: solid #ececec;
    border-width: 0 2px;
  }

  .thumb {
    width: 16px;
    height: 149px;
    border-radius: 8px;
    background: #c1c1c1;
  }

  /* Diagram */
  .diagram {
    position: relative;
    height: 730px;
    overflow: hidden;
    background: #f5f5f5;
  }

  .canvas {
    position: relative;
    width: 1551px;
    margin: 0 auto;
  }

  .edges,
  .handles {
    position: absolute;
    left: 0;
    top: 0;
    overflow: visible;
    fill: none;
    stroke: #000;
    stroke-width: 3;
  }

  .handles {
    stroke-width: 2;
  }

  .handles circle {
    fill: #fff;
  }

  .edges .head {
    stroke-width: 2;
  }

  .edges .loop {
    stroke: purple;
    stroke-width: 2;
    stroke-dasharray: 3 2;
  }

  .node {
    position: absolute;
    width: 73px;
    height: 51px;
    padding: 4px 2px 0 3px;
    box-sizing: border-box;
    border-left: 6px solid;
    border-radius: 3px;
    overflow: hidden;
    color: #111;
    font-size: 10px;
    line-height: 14px;
  }

  .source { background: #9e9e9e; border-color: #0a0a0a; }
  .store { background: #c8b4a2; border-color: #84450b; }
  .work { background: #9a9ab1; border-color: #000040; }
  .move { background: #c0c0c0; border-color: #808080; }
  .node.tool { background: #adaed9; border-color: #2c3399; }
  .sink { background: #e0a9a6; border-color: #b22a22; }

  .node.branch {
    padding-left: 9px;
    border-left: 0;
    border-radius: 0;
    color: #fff;
  }

  .branch .node-head {
    justify-content: center;
    padding-right: 7px;
    font-size: 8px;
    font-weight: 700;
  }

  .branch .node-name {
    padding-left: 4px;
  }

  .diamond {
    position: absolute;
    inset: 0;
    fill: #800b80;
  }

  .node-head {
    position: relative;
    display: flex;
    justify-content: space-between;
    align-items: center;
    height: 17px;
    padding: 0 8px 2px 1px;
    box-sizing: border-box;
  }

  .node-head svg {
    width: 16px;
    height: 14px;
    fill: none;
    stroke: #111;
    stroke-width: 1;
  }

  .node-head svg .solid {
    fill: #111;
  }

  .node-head span {
    margin-left: auto;
  }

  .branch .node-head span {
    margin: 0;
  }

  .node-name {
    position: relative;
    width: 62px;
    font-weight: 700;
  }

  .alert {
    position: absolute;
    width: 122px;
    height: 65px;
    padding: 6px 14px 0 15px;
    box-sizing: border-box;
    border: 1px solid #ff7b7b;
    background: #f5f5f5;
    color: #f22;
    font-size: 12px;
    line-height: 17px;
    text-spacing-trim: space-all;
  }

  .alert-mark {
    position: absolute;
    left: -10px;
    top: -15px;
    width: 28px;
    height: 28px;
    box-sizing: border-box;
    border: 1px solid #f22;
    border-radius: 50%;
    background: #f5f5f5;
    font-size: 18px;
    line-height: 26px;
    text-align: center;
  }

  .controls {
    position: absolute;
    left: 22px;
    bottom: 23px;
    width: 39px;
    box-shadow: 0 0 3px rgba(0, 0, 0, 0.12);
  }

  .controls button {
    display: flex;
    align-items: center;
    justify-content: center;
    width: 39px;
    height: 40px;
    padding: 0;
    border: 0;
    border-bottom: 1px solid #eee;
    background: #fefefe;
  }

  .controls svg {
    width: 18px;
    height: 18px;
    fill: none;
    stroke: #000;
    stroke-width: 2;
  }

  /* Graphs */
  .board {
    padding: 7px 6px 0;
    background: #121212;
  }

  .graphs {
    display: grid;
    grid-template-columns: repeat(4, 1fr);
    width: 96.9%;
    margin-bottom: -5px;
    position: relative;
  }

  .graph {
    position: relative;
    border: 1px solid #84cfca;
  }

  .graph-head {
    display: grid;
    grid-template-columns: 41px 1fr 41px;
    padding: 12px 0 2px;
  }

  .graph-head h3 {
    grid-column: 2;
    font-size: 24px;
    font-weight: 500;
    text-align: center;
  }

  .graph-head button {
    display: flex;
    align-items: center;
    width: 22px;
    height: 36px;
    padding: 0;
    border: 0;
    background: none;
  }

  .graph-head svg {
    width: 22px;
    height: 22px;
    fill: none;
    stroke: #fff;
    stroke-width: 4;
  }

  .plot {
    display: block;
    width: 100%;
    height: 492px;
    fill: none;
  }

  .plot text {
    font-family: Inter, 'Noto Sans CJK JP', sans-serif;
    fill: #d6d6de;
  }

  .plot .label { font-size: 19px; }
  .plot .legend { font-size: 18px; }
  .plot .strong { fill: #fff; }
  .plot .axis-name { font-size: 21px; }

  .series {
    stroke: #61d5f6;
    stroke-width: 3;
    stroke-linejoin: bevel;
  }

  .band { fill: #61d5f6; }
  .bright { fill: #68eafe; }

  .plot .rule { stroke: #a9a8b8; stroke-width: 2; }
  .plot .base { stroke: #77767f; }
  .plot .grid { stroke: #d5d8e2; stroke-width: 2; }
  .plot .dash { stroke: #fff; stroke-width: 1; stroke-dasharray: 6 3; }
  .plot .tick { stroke: #66656e; stroke-width: 2; }
  .plot .tool { stroke: #eee; stroke-width: 3; }

  .idle { fill: #666; }
  .blocked { fill: #ff1515; }
  .timeline { opacity: 0.8; }

  .zoom-fill { fill: #22334e; }
  .zoom-bar { fill: #999eac; }
  .zoom-edge { stroke: #acb8d1; stroke-width: 2; }
  .grip { stroke: #fff; stroke-width: 1; }
  .zoom-knob { fill: #fff; stroke: #acb8d1; }

  .pointer { stroke: #8fa9ae; stroke-width: 2; stroke-dasharray: 6 4; }
  .pointer-box { fill: #706f7a; }
  .plot .pointer-text { font-size: 22px; fill: #fff; }
  .corner { stroke: var(--accent); stroke-width: 4; }

  .tooltip {
    position: absolute;
    left: 80px;
    top: 304px;
    width: 368px;
    padding: 8px 18px 8px 15px;
    box-sizing: border-box;
    border-radius: 6px;
    background: #fff;
    box-shadow: 0 2px 10px rgba(0, 0, 0, 0.25);
    color: #777;
    font-family: Inter, 'Noto Sans CJK JP', sans-serif;
    font-size: 21px;
  }

  .tooltip p {
    font-size: 22px;
    text-align: center;
  }

  .tip-row {
    display: flex;
    align-items: center;
  }

  .tip-row.inner {
    padding-left: 10px;
  }

  .tip-row i {
    width: 15px;
    height: 15px;
    margin-right: 10px;
    border-radius: 50%;
    background: #82def9;
  }

  .tip-row b {
    margin-left: auto;
    font-size: 22px;
    color: #666;
  }
</style>
